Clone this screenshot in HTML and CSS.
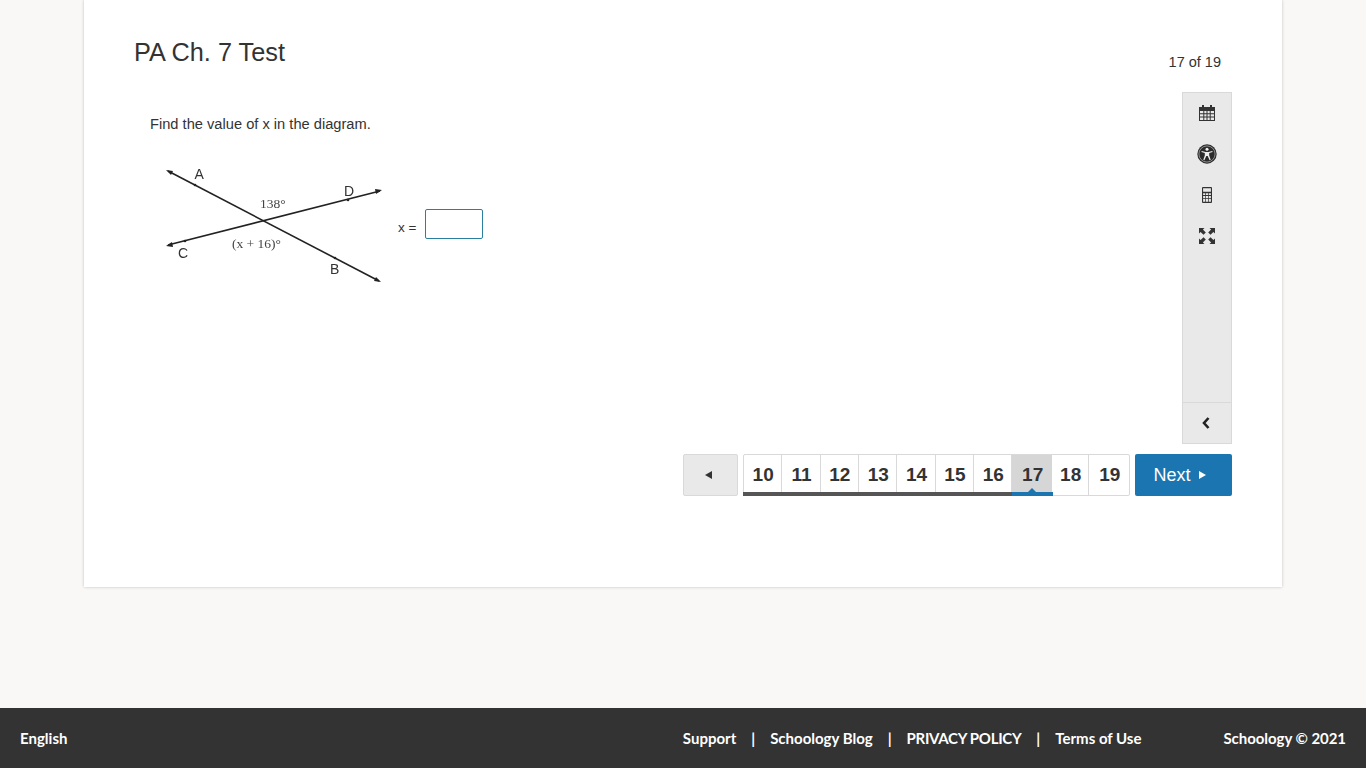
FILE: index.html
```html
<!DOCTYPE html>
<html lang="en">
<head>
    <meta charset="UTF-8">
    <meta name="viewport" content="width=device-width, initial-scale=1.0">
    <title>PA Ch. 7 Test</title>
    <link rel="stylesheet" href="styles.css">
</head>
<body>

    <main class="card">
        <div class="test-header">
            <h1>PA Ch. 7 Test</h1>
            <span class="progress">17 of 19</span>
        </div>

        <div class="test-body">
            <section class="question">
                <p>Find the value of x in the diagram.</p>
                <div class="answer-row">
                    <!-- Diagram -->
                    <svg class="diagram" width="240" height="130" viewBox="0 0 240 130">
                        <g stroke="#222" stroke-width="1.600" fill="none">
                            <line x1="18" y1="11" x2="229" y2="121"/>
                            <line x1="18" y1="85" x2="230" y2="31"/>
                        </g>
                        <g fill="#222">
                            <polygon points="16,10 23,11 21,15"/>
                            <polygon points="231,122 224,121 226,117"/>
                            <polygon points="16,86 22,82 23,87"/>
                            <polygon points="232,30 225,29 226,34"/>
                            <circle cx="45" cy="25" r="1.300"/>
                            <circle cx="198" cy="40" r="1.300"/>
                            <circle cx="35" cy="81" r="1.300"/>
                            <circle cx="185" cy="98" r="1.300"/>
                        </g>
                        <g class="point-label">
                            <text x="44.500" y="19">A</text>
                            <text x="194" y="36">D</text>
                            <text x="28" y="98">C</text>
                            <text x="180" y="114">B</text>
                        </g>
                        <g class="angle-label">
                            <text x="110" y="48">138°</text>
                            <text x="82" y="88">(x + 16)°</text>
                        </g>
                    </svg>
                    <label class="answer-label" for="answer">x =</label>
                    <input class="answer-input" id="answer" type="text">
                </div>
            </section>

            <!-- Tools -->
            <aside class="toolbar">
                <div class="tools">
                    <div class="tool">
                        <svg width="16" height="16" viewBox="0 0 16 16">
                            <path fill="#333" d="M3 0h2v2h6V0h2v2h3v14H0V2h3zM1 6v2.300h3.300V6zm4.300 0v2.300h2.200V6zm3.200 0v2.300h2.200V6zm3.200 0v2.300H15V6zM1 9.300v2.200h3.300V9.300zm4.300 0v2.200h2.200V9.300zm3.200 0v2.200h2.200V9.300zm3.200 0v2.200H15V9.300zM1 12.500V15h3.300v-2.500zm4.300 0V15h2.200v-2.500zm3.200 0V15h2.200v-2.500zm3.200 0V15H15v-2.500z" fill-rule="evenodd"/>
                        </svg>
                    </div>
                    <div class="tool">
                        <svg width="20" height="20" viewBox="0 0 20 20">
                            <circle cx="10" cy="10" r="9.700" fill="#2b2b2b"/>
                            <circle cx="10" cy="10" r="8.100" fill="none" stroke="#bbb" stroke-width=".7"/>
                            <circle cx="10" cy="5.200" r="1.500" fill="#eee"/>
                            <path fill="#eee" d="M4.700 7l3.800.9h3l3.800-.9.300 1.100-3.400 1v2.400l1.500 4.300-1.100.4L10.700 12h-1.400l-1.900 4.200-1.100-.4 1.500-4.300V9.100l-3.400-1z"/>
                        </svg>
                    </div>
                    <div class="tool">
                        <svg width="10" height="16" viewBox="0 0 10 16">
                            <path fill="#333" fill-rule="evenodd" d="M1 0h8a1 1 0 0 1 1 1v14a1 1 0 0 1-1 1H1a1 1 0 0 1-1-1V1a1 1 0 0 1 1-1zm.1 1.200v3.600h7.800V1.200zm0 5v1.900h2.100V6.200zm2.800 0v1.900h2.200V6.200zm2.900 0v1.900h2.100V6.200zM1.100 9v1.900h2.100V9zm2.800 0v1.900h2.200V9zm2.900 0v1.900h2.100V9zm-5.700 2.800v2.900h2.100v-2.900zm2.800 0v2.900h2.200v-2.900zm2.900 0v2.900h2.100v-2.900z"/>
                        </svg>
                    </div>
                    <div class="tool">
                        <svg width="16" height="16" viewBox="0 0 16 16">
                            <path fill="#333" d="M0 0h5.500L3.900 1.600 6.800 4.500 4.500 6.800 1.600 3.900 0 5.500zM16 0v5.500l-1.600-1.600-2.900 2.900-2.300-2.300 2.900-2.900L10.500 0zM0 16v-5.500l1.600 1.600 2.900-2.900 2.300 2.300-2.900 2.900L5.500 16zM16 16h-5.500l1.600-1.600-2.900-2.900 2.300-2.300 2.900 2.900 1.600-1.600z"/>
                        </svg>
                    </div>
                </div>
                <div class="tool-collapse">
                    <svg width="8" height="12" viewBox="0 0 8 12">
                        <path fill="none" stroke="#222" stroke-width="2.600" d="M6.500 1L2 6l4.500 5"/>
                    </svg>
                </div>
            </aside>
        </div>

        <!-- Question navigation -->
        <nav class="pager">
            <button class="prev-button" type="button"><span class="arrow-left"></span></button>
            <ul class="pages">
                <li class="page seen">10</li>
                <li class="page seen">11</li>
                <li class="page seen">12</li>
                <li class="page seen">13</li>
                <li class="page seen">14</li>
                <li class="page seen">15</li>
                <li class="page seen">16</li>
                <li class="page current">17</li>
                <li class="page">18</li>
                <li class="page">19</li>
            </ul>
            <button class="next-button" type="button">Next<span class="arrow-right"></span></button>
        </nav>
    </main>

    <footer>
        <span class="language">English</span>
        <div class="footer-right">
            <div class="footer-links">
                <a href="#">Support</a>
                <span>|</span>
                <a href="#">Schoology Blog</a>
                <span>|</span>
                <a href="#" class="policy-link">PRIVACY POLICY</a>
                <span>|</span>
                <a href="#">Terms of Use</a>
            </div>
            <span class="copyright">Schoology © 2021</span>
        </div>
    </footer>

</body>
</html>
```

FILE: styles.css
```css
/* General Styles */
html, body {
    margin: 0;
    height: 100%;
}

body {
    display: flex;
    flex-direction: column;
    height: 768px;
    overflow: hidden;
    background-color: #f9f8f6;
    font-family: 'Liberation Sans', Arial, sans-serif;
    color: #333;
}

.card {
    box-sizing: border-box;
    width: 1198px;
    height: 587px;
    margin-left: 84px;
    padding: 0 50px;
    background-color: #fff;
    box-shadow: 0 0 3px rgba(0, 0, 0, 0.22);
}

/* Header */
.test-header {
    display: flex;
    justify-content: space-between;
    height: 92px;
}

h1 {
    margin: 37px 0 0;
    font-size: 25.300px;
    font-weight: normal;
    line-height: 30px;
}

.progress {
    margin: 54px 11px 0 0;
    font-size: 14.500px;
    line-height: 16px;
}

/* Question */
.test-body {
    display: flex;
    justify-content: space-between;
    height: 352px;
}

.question {
    padding-left: 16px;
}

.question p {
    margin: 23px 0 0;
    font-size: 14.670px;
    line-height: 18px;
}

.answer-row {
    display: flex;
    align-items: flex-start;
    margin-top: 27px;
}

.diagram {
    display: block;
    width: 240px;
    height: 130px;
    filter: blur(0.35px);
}

.point-label text {
    font-family: 'Liberation Sans', Arial, sans-serif;
    font-size: 14px;
    fill: #333;
}

.angle-label text {
    font-family: 'Liberation Serif', serif;
    font-size: 13.500px;
    fill: #444;
}

.answer-label {
    margin: 60px 0 0 8px;
    font-size: 13.500px;
    line-height: 16px;
}

.answer-input {
    box-sizing: border-box;
    width: 58px;
    height: 30px;
    margin: 49px 0 0 8.600px;
    border: 1px solid #2a7f9f;
    border-radius: 2px;
    background-color: #fff;
}

/* Side Toolbar */
.toolbar {
    box-sizing: border-box;
    display: flex;
    flex-direction: column;
    justify-content: space-between;
    width: 50px;
    border: 1px solid #d9d9d9;
    background-color: #e9e9e9;
}

.tools {
    display: flex;
    flex-direction: column;
    margin-top: -1px;
}

.tool {
    display: flex;
    justify-content: center;
    align-items: center;
    height: 41px;
}

.tool-collapse {
    display: flex;
    justify-content: center;
    align-items: center;
    height: 41px;
    padding-right: 2px;
    box-sizing: border-box;
    border-top: 1px solid #d9d9d9;
}

/* Pager */
.pager {
    display: flex;
    justify-content: flex-end;
    gap: 5px;
    margin-top: 10px;
    height: 42px;
}

.prev-button {
    display: flex;
    justify-content: center;
    align-items: center;
    box-sizing: border-box;
    width: 55px;
    height: 42px;
    padding: 0 5px 0 0;
    border: 1px solid #d9d9d9;
    border-radius: 2px;
    background-color: #e9e9e9;
}

.arrow-left {
    width: 0;
    height: 0;
    border-top: 4px solid transparent;
    border-bottom: 4px solid transparent;
    border-right: 7px solid #333;
}

.arrow-right {
    display: inline-block;
    width: 0;
    height: 0;
    margin-left: 8px;
    vertical-align: 2px;
    border-top: 4px solid transparent;
    border-bottom: 4px solid transparent;
    border-left: 7px solid #fff;
}

.pages {
    display: flex;
    box-sizing: border-box;
    width: 387px;
    height: 42px;
    margin: 0;
    padding: 0;
    list-style: none;
    border: 1px solid #d9d9d9;
    border-radius: 2px;
}

.page {
    position: relative;
    box-sizing: border-box;
    width: 38.350px;
    height: 40px;
    padding-left: 1px;
    border-right: 1px solid #d9d9d9;
    font-size: 19px;
    font-weight: bold;
    line-height: 40px;
    text-align: center;
    color: #333;
}

.page:last-child {
    flex: 1;
    border-right: none;
}

/* Underlines run over the cell borders, so they hang off the cell */
.seen::after,
.current::after {
    content: '';
    position: absolute;
    left: -1px;
    right: -1px;
    bottom: -1px;
    height: 4px;
    background-color: #555;
}

.current {
    width: 39.500px;
    background-color: #d6d6d6;
    border-right: none;
}

.current + .page {
    width: 37.500px;
}

.current::after {
    right: -1px;
    left: 0;
    background-color: #1a75b0;
}

/* Little caret sitting on the current page's underline */
.current::before {
    content: '';
    position: absolute;
    left: 50%;
    bottom: 3px;
    margin-left: -4px;
    border-left: 4px solid transparent;
    border-right: 4px solid transparent;
    border-bottom: 4px solid #1a75b0;
}

.next-button {
    box-sizing: border-box;
    width: 97px;
    height: 42px;
    padding: 0 8px 0 0;
    border: none;
    border-radius: 2px;
    background-color: #1a75b0;
    color: #fff;
    font-family: 'Liberation Sans', Arial, sans-serif;
    font-size: 18px;
}

/* Footer */
footer {
    box-sizing: border-box;
    display: flex;
    justify-content: space-between;
    align-items: center;
    height: 60px;
    margin-top: 121px;
    padding: 0 20px;
    background-color: #333;
    color: #fff;
    font-family: 'Lato', sans-serif;
    font-size: 15px;
    font-weight: bold;
}

.footer-right {
    display: flex;
    align-items: center;
}

.footer-links {
    display: flex;
    gap: 15px;
    margin-right: 82px;
}

.footer-links a {
    color: #fff;
    text-decoration: none;
}

.policy-link {
    letter-spacing: -0.3px;
}

.copyright {
    letter-spacing: -0.05px;
}
```
